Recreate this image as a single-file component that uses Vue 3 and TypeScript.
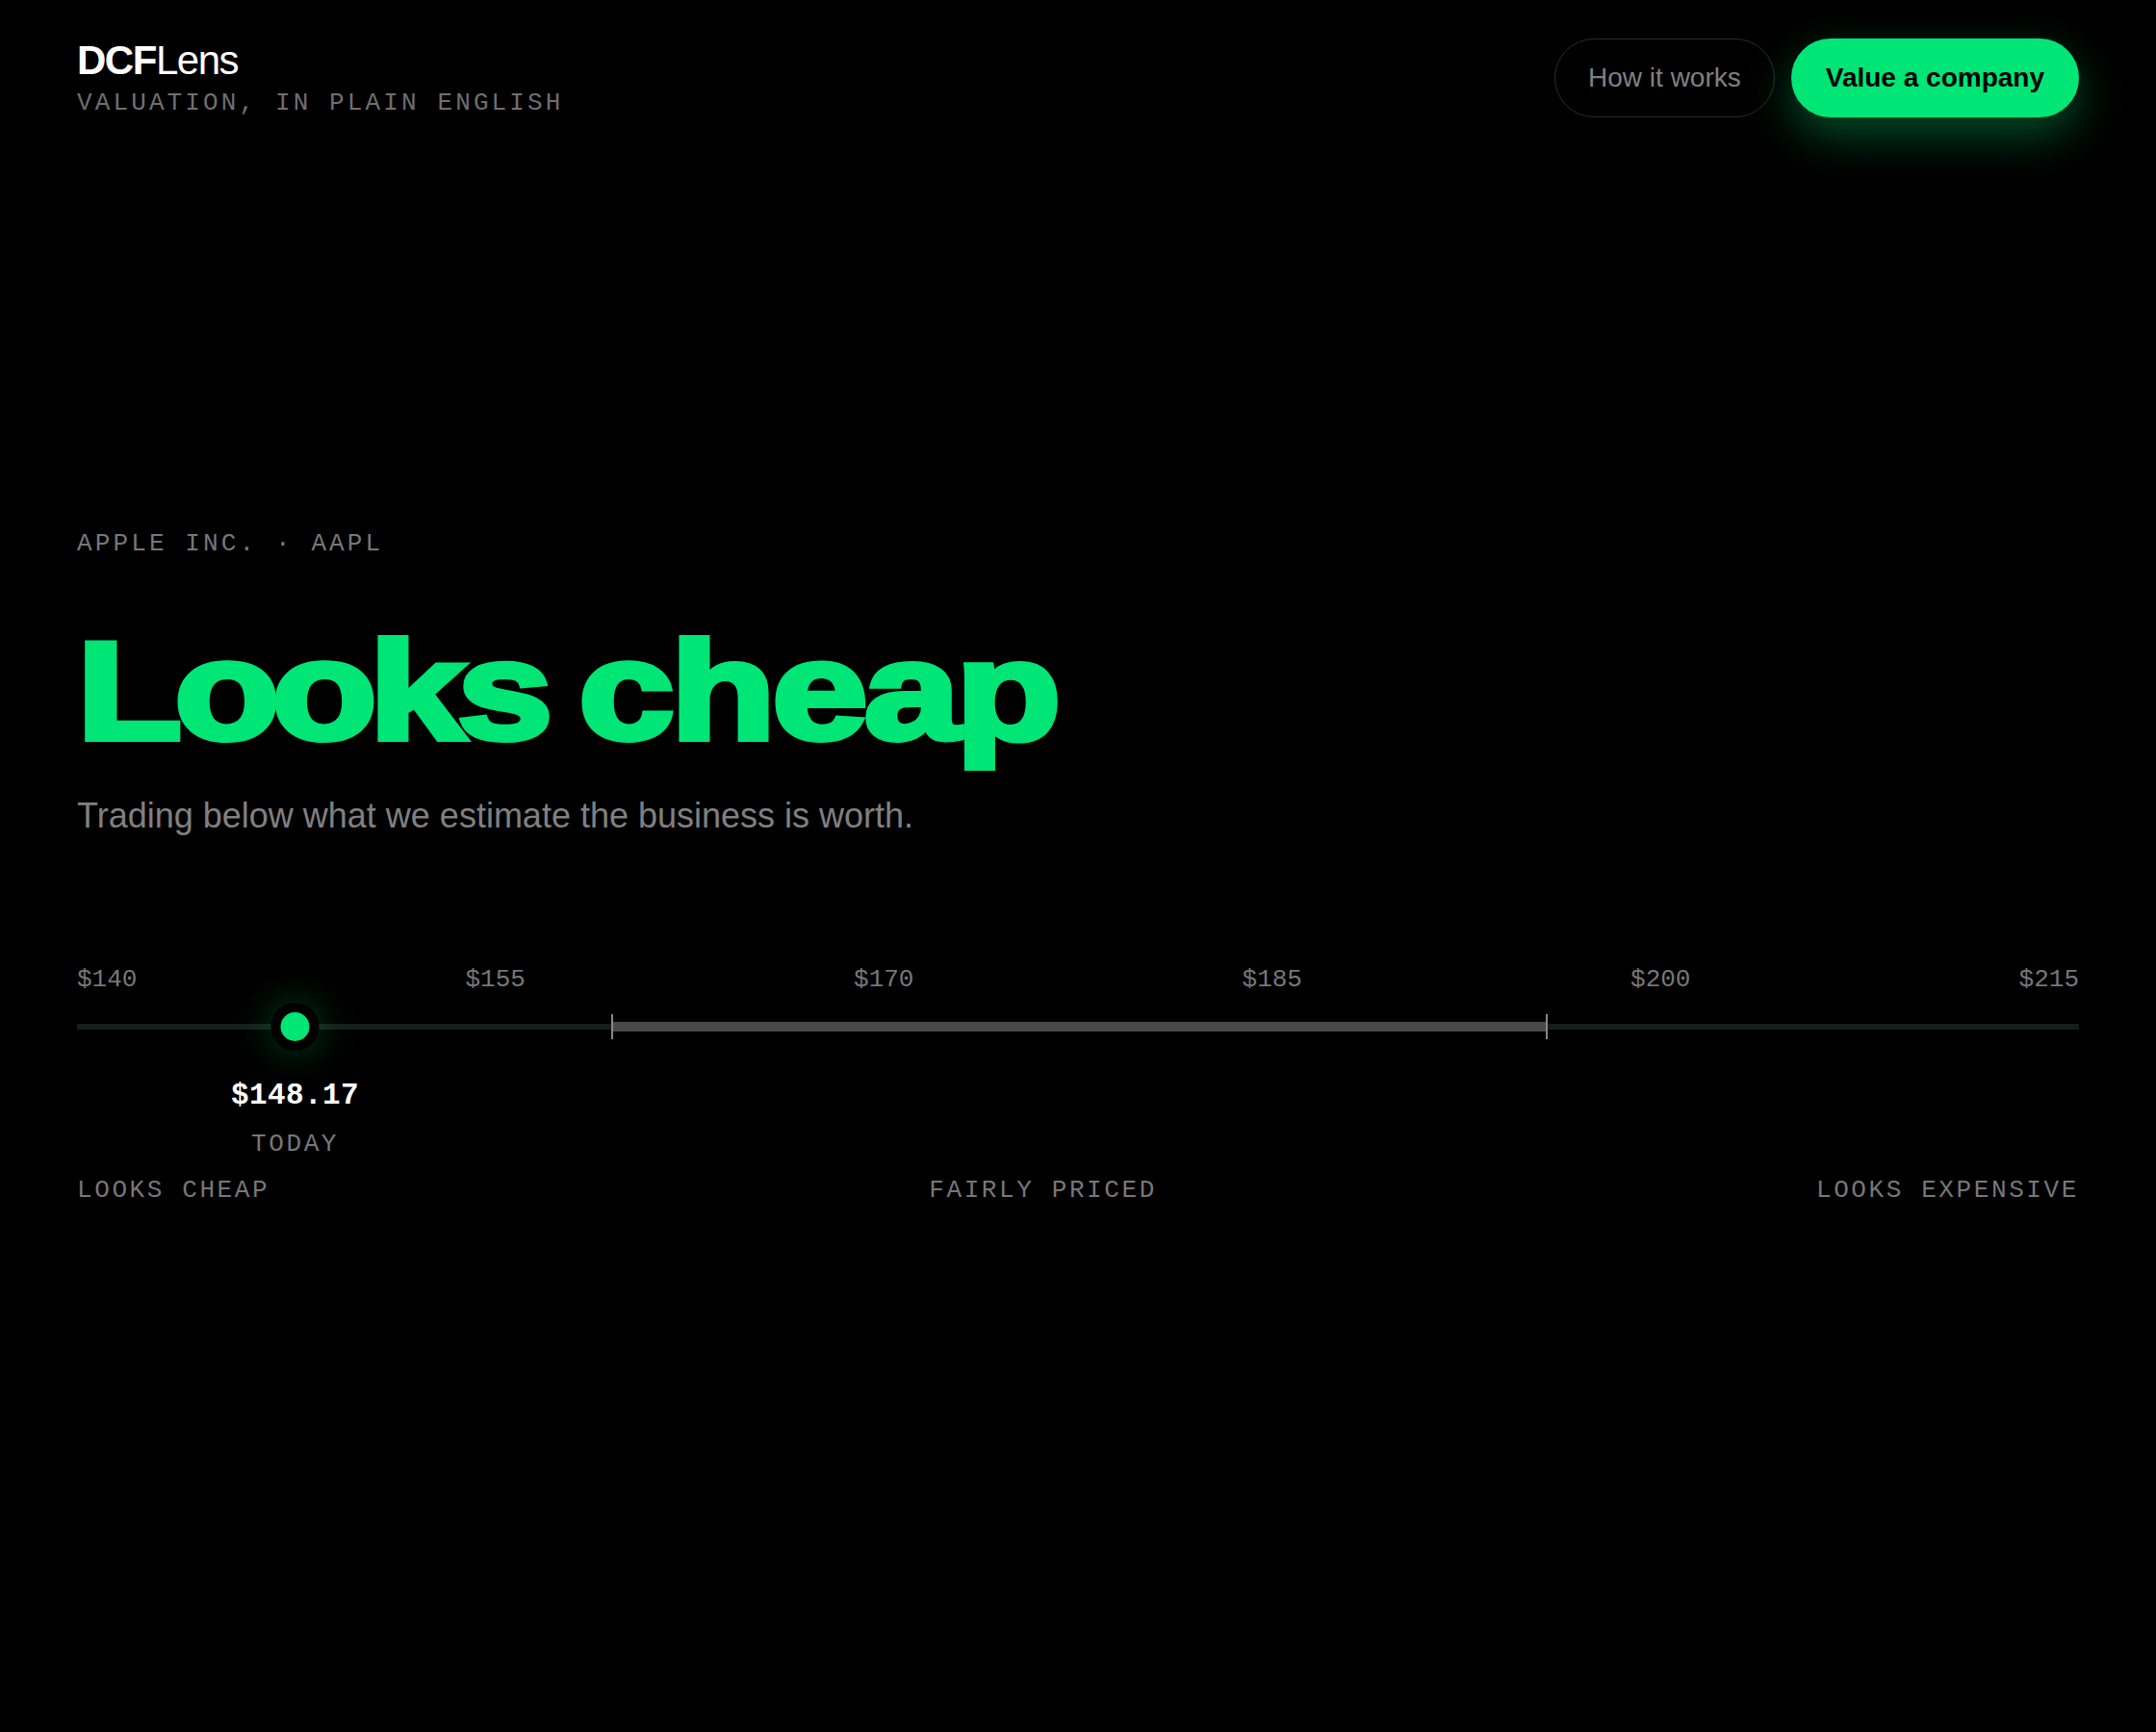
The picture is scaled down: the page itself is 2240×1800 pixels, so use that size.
<template>
  <div class="page">
    <header class="nav">
      <div class="brand">
        <div class="logo"><b>DCF</b>Lens</div>
        <div class="tagline mono">VALUATION, IN PLAIN ENGLISH</div>
      </div>
      <div class="actions">
        <button class="btn ghost">How it works</button>
        <button class="btn primary">Value a company</button>
      </div>
    </header>

    <main class="hero">
      <div class="eyebrow mono">APPLE INC. · AAPL</div>
      <h1 class="verdict"><span class="word-a">Looks</span> <span class="word-b">cheap</span></h1>
      <p class="sub">Trading below what we estimate the business is worth.</p>

      <section class="range">
        <div class="ticks mono">
          <span v-for="t in ticks" :key="t">${{ t }}</span>
        </div>
        <div class="track">
          <div class="fair" :style="{ left: pct(fairLow), width: pct(min + fairHigh - fairLow) }"></div>
          <div class="marker" :style="{ left: pct(price) }">
            <div class="dot"></div>
            <div class="price mono">${{ price.toFixed(2) }}</div>
            <div class="today mono">TODAY</div>
          </div>
        </div>
        <div class="zones mono">
          <span>LOOKS CHEAP</span>
          <span>FAIRLY PRICED</span>
          <span>LOOKS EXPENSIVE</span>
        </div>
      </section>
    </main>
  </div>
</template>

<script setup lang="ts">
const min = 140
const max = 215
const ticks = [140, 155, 170, 185, 200, 215]
const fairLow = 160
const fairHigh = 195.1
const price = 148.17

const pct = (v: number) => `${((v - min) / (max - min)) * 100}%`
</script>

<style>
html, body {
  background: #000;
}
</style>

<style scoped>
.page {
  min-height: 1800px;
  background: #000;
  color: #fff;
  font-family: "Liberation Sans", Arial, sans-serif;
  box-sizing: border-box;
  padding: 40px 80px 0;
}

.mono {
  font-family: "Liberation Mono", monospace;
}

.nav {
  display: flex;
  justify-content: space-between;
  align-items: flex-start;
}

.logo {
  font-size: 42px;
  line-height: 46px;
  letter-spacing: -0.035em;
  font-weight: 400;
}

.logo b {
  font-weight: 700;
}

.tagline {
  margin-top: 7px;
  font-size: 26px;
  line-height: 28px;
  letter-spacing: 0.12em;
  color: #6f6f6f;
}

.actions {
  display: flex;
  gap: 17px;
}

.btn {
  height: 82px;
  border-radius: 41px;
  font-family: inherit;
  font-size: 28px;
  padding: 0 36px;
  box-sizing: border-box;
}

.ghost {
  padding: 0 34px;
  background: transparent;
  border: 1px solid #24302a;
  color: #808080;
}

.primary {
  background: #00e676;
  border: none;
  color: #000;
  font-weight: 700;
  box-shadow: 0 18px 48px rgba(0, 230, 118, 0.34);
}

.hero {
  padding-top: 429px;
}

.eyebrow {
  font-size: 26px;
  line-height: 28px;
  letter-spacing: 0.12em;
  color: #777;
}

.verdict {
  width: max-content;
  margin: 52px 0 0;
  font-size: 144px;
  line-height: 176px;
  font-weight: 700;
  word-spacing: -12px;
  color: #00e676;
  -webkit-text-stroke: 6px #00e676;
  transform: scaleX(1.24);
  transform-origin: left center;
  white-space: nowrap;
}

.word-a {
  letter-spacing: -0.044em;
}

.word-b {
  letter-spacing: -0.021em;
}

.sub {
  margin: 19px 0 0;
  font-size: 36px;
  line-height: 44px;
  color: #808080;
}

.range {
  margin-top: 133px;
}

.ticks {
  display: flex;
  justify-content: space-between;
  font-size: 26px;
  line-height: 30px;
  color: #777;
}

.track {
  position: relative;
  height: 6px;
  margin-top: 31px;
  background: #151f19;
}

.fair {
  position: absolute;
  top: -2px;
  height: 10px;
  background: #4a4a4a;
  box-sizing: border-box;
}

.fair::before,
.fair::after {
  content: "";
  position: absolute;
  top: -8px;
  width: 2px;
  height: 26px;
  background: #888;
}

.fair::before {
  left: 0;
}

.fair::after {
  right: 0;
}

.marker {
  position: absolute;
  top: 3px;
  display: flex;
  flex-direction: column;
  align-items: center;
  transform: translate(-50%, -25px);
}

.dot {
  width: 30px;
  height: 30px;
  border-radius: 50%;
  background: #00e676;
  border: 10px solid #000;
  box-shadow: 0 0 40px rgba(0, 230, 118, 0.3);
}

.price {
  margin-top: 29px;
  font-size: 31px;
  line-height: 36px;
  letter-spacing: 0.4px;
  font-weight: 700;
  white-space: nowrap;
  color: #fff;
}

.today {
  margin-top: 18px;
  font-size: 26px;
  line-height: 28px;
  letter-spacing: 0.1em;
  color: #777;
}

.zones {
  display: flex;
  justify-content: space-between;
  margin-top: 153px;
  font-size: 26px;
  line-height: 28px;
  letter-spacing: 0.1em;
  color: #777;
}
</style>
